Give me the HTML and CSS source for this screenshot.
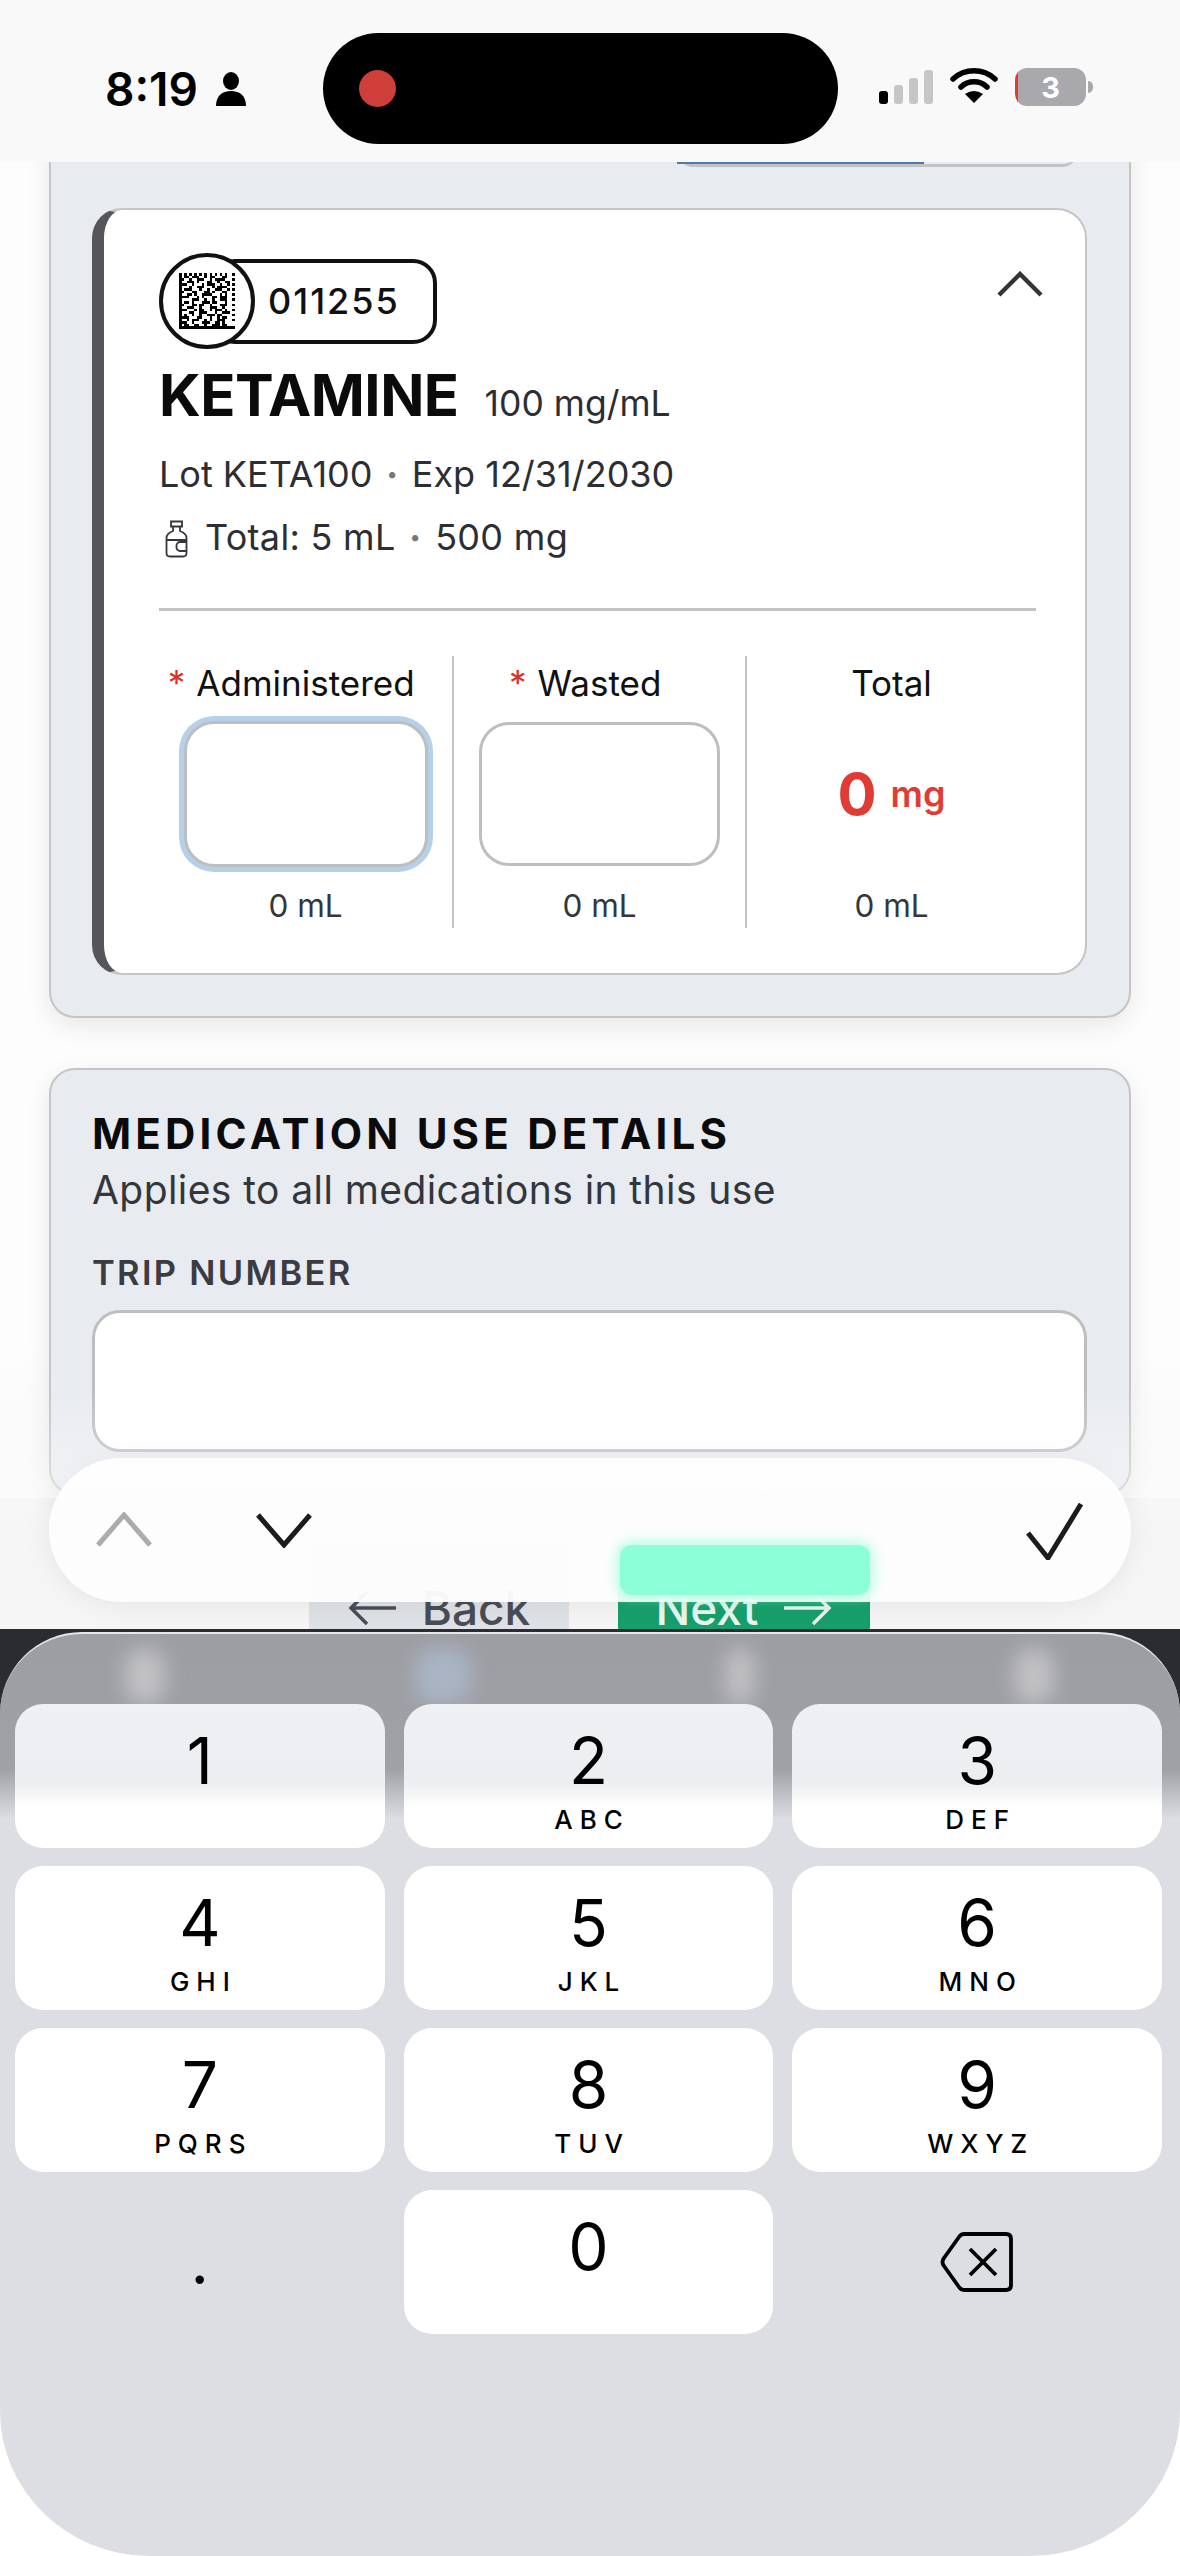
FILE: index.html
```html
<!DOCTYPE html>
<html lang="en">
<head>
  <meta charset="UTF-8">
  <meta name="viewport" content="width=device-width, initial-scale=1">
  <title>Medication use</title>
  <link rel="stylesheet" href="styles.css">
</head>
<body>

  <div class="phone">

    <header class="status-bar">
      <div class="status-left">
        <span class="status-time">8:19</span>
        <svg class="icon-person" viewBox="0 0 32 34"><ellipse cx="16" cy="9" rx="8" ry="9"/><path d="M1 34c0-10 6-15 15-15s15 5 15 15z"/></svg>
      </div>
      <div class="island"><span class="island-dot"></span></div>
      <div class="signal">
        <span class="signal-bar signal-on bar-1"></span>
        <span class="signal-bar bar-2"></span>
        <span class="signal-bar bar-3"></span>
        <span class="signal-bar bar-4"></span>
      </div>
      <svg class="icon-wifi" viewBox="0 0 48 36"><path d="M3 12a31 31 0 0 1 42 0M11 20a19 19 0 0 1 26 0" fill="none" stroke="#000" stroke-width="5.5" stroke-linecap="round"/><path d="M24 36l-9-9q9-6 18 0z"/></svg>
      <div class="battery"><span class="battery-level">3</span><span class="battery-nub"></span></div>
    </header>

    <main class="content">

      <section class="panel panel-meds">
        <div class="stock-bar"><span class="stock-fill"></span></div>

        <article class="med-card">
          <div class="med-head">
            <div class="barcode-badge">
              <span class="barcode-circle">
                <svg class="datamatrix" viewBox="0 0 22 22" shape-rendering="crispEdges"><path d="M.5 0v22M0 21.5h22M21.5 0v1m0 1v1m0 1v1m0 1v1m0 1v1m0 1v1m0 1v1m0 1v1m0 1v1m0 1v1M2 .5h1m1 0h1m1 0h1m1 0h1m1 0h1m1 0h1m1 0h1m1 0h1m1 0h1M2 1.5h2m1 0h3m2 0h1m1 0h2m3 0h2M1 2.5h1m2 0h1m2 0h3m2 0h1m1 0h4M3 3.5h3m1 0h1m3 0h2m2 0h1m2 0h2M1 4.5h2m2 0h1m3 0h1m1 0h3m2 0h1m2 0h1M4 5.5h1m2 0h3m3 0h1m1 0h4M2 6.5h3m3 0h1m2 0h1m2 0h3m2 0h1M1 7.5h1m3 0h2m3 0h2m1 0h1m3 0h2M3 8.5h2m1 0h1m2 0h4m3 0h1m1 0h1M1 9.5h3m3 0h1m1 0h1m3 0h2m1 0h3M5 10.5h3m2 0h1m2 0h1m2 0h3M2 11.5h2m1 0h1m3 0h3m1 0h2m3 0h1M1 12.5h1m3 0h2m1 0h2m2 0h1m3 0h3M3 13.5h3m2 0h1m3 0h3m2 0h1M1 14.5h2m3 0h1m1 0h2m2 0h1m1 0h3m1 0h1M4 15.5h2m2 0h3m3 0h1m2 0h3M2 16.5h1m2 0h1m2 0h1m2 0h3m1 0h2M1 17.5h3m3 0h2m3 0h1m2 0h1m1 0h2M3 18.5h1m1 0h3m2 0h1m1 0h1m2 0h3M1 19.5h2m2 0h1m3 0h3m2 0h2m1 0h1M2 20.5h2m2 0h2m2 0h1m2 0h3m1 0h2" fill="none" stroke="#000" stroke-width="1"/></svg>
              </span>
              <span class="barcode-pill">011255</span>
            </div>
            <svg class="icon-collapse" viewBox="0 0 46 26"><path d="M2 24L23 3l21 21" fill="none" stroke="#333" stroke-width="4.4"/></svg>
          </div>

          <div class="med-title">
            <h2>KETAMINE</h2>
            <span class="med-conc">100 mg/mL</span>
          </div>
          <p class="med-line med-lot">Lot KETA100<span class="dot">•</span>Exp 12/31/2030</p>
          <p class="med-line med-total">
            <svg class="icon-vial" viewBox="0 0 24 38"><path d="M6 1.5h11v5H6zM8 6.5v4.5C4 12.500 1.500 14 1.500 18v15q0 3.500 3.500 3.500h13q3.500 0 3.500-3.500V18c0-4-2.500-5.500-6.500-7V6.500M1.500 20h20M21.500 31H15a3.500 3.500 0 0 1-3.500-3.500v-2A3.500 3.500 0 0 1 15 22h6.500" fill="none" stroke="#33363b" stroke-width="1.800"/></svg>
            Total: 5 mL<span class="dot">•</span>500 mg
          </p>

          <hr class="med-divider">

          <div class="dose-grid">
            <div class="dose-col">
              <label class="dose-label"><span class="req">*</span>Administered</label>
              <div class="dose-input dose-input-focus"></div>
              <span class="dose-ml">0 mL</span>
            </div>
            <div class="dose-col">
              <label class="dose-label"><span class="req">*</span>Wasted</label>
              <div class="dose-input"></div>
              <span class="dose-ml">0 mL</span>
            </div>
            <div class="dose-col">
              <label class="dose-label">Total</label>
              <div class="dose-total"><b>0</b> <span>mg</span></div>
              <span class="dose-ml">0 mL</span>
            </div>
          </div>
        </article>
      </section>

      <section class="panel panel-details">
        <h3>MEDICATION USE DETAILS</h3>
        <p class="panel-sub">Applies to all medications in this use</p>
        <label class="field-label">TRIP NUMBER</label>
        <div class="field-input"></div>
      </section>

      <div class="nav-row">
        <button class="nav-btn nav-back">
          <svg class="icon-arrow" viewBox="0 0 50 36"><path d="M48 18H3M19 2L3 18l16 16" fill="none" stroke="currentColor" stroke-width="3.500"/></svg>
          Back
        </button>
        <button class="nav-btn nav-next">
          Next
          <svg class="icon-arrow" viewBox="0 0 50 36"><path d="M2 18h45M31 2l16 16-16 16" fill="none" stroke="currentColor" stroke-width="3.500"/></svg>
        </button>
      </div>
    </main>

    <div class="input-bar">
      <span class="next-glow"></span>
      <div class="input-bar-arrows">
        <svg class="icon-chev" viewBox="0 0 58 36"><path d="M3 33L29 3l26 30" fill="none" stroke="#acacac" stroke-width="5"/></svg>
        <svg class="icon-chev" viewBox="0 0 58 36"><path d="M3 3l26 30L55 3" fill="none" stroke="#1c1c1e" stroke-width="5"/></svg>
      </div>
      <svg class="icon-check" viewBox="0 0 60 60"><path d="M4 33l20 25L57 4" fill="none" stroke="#1c1c1e" stroke-width="5"/></svg>
    </div>

    <div class="keyboard-wrap">
      <div class="keyboard">
        <span class="blob blob-1"></span>
        <span class="blob blob-2"></span>
        <span class="blob blob-3"></span>
        <span class="blob blob-4"></span>

        <div class="key key-top"><span class="key-num">1</span></div>
        <div class="key key-top"><span class="key-num">2</span><span class="key-abc">ABC</span></div>
        <div class="key key-top"><span class="key-num">3</span><span class="key-abc">DEF</span></div>
        <div class="key"><span class="key-num">4</span><span class="key-abc">GHI</span></div>
        <div class="key"><span class="key-num">5</span><span class="key-abc">JKL</span></div>
        <div class="key"><span class="key-num">6</span><span class="key-abc">MNO</span></div>
        <div class="key"><span class="key-num">7</span><span class="key-abc">PQRS</span></div>
        <div class="key"><span class="key-num">8</span><span class="key-abc">TUV</span></div>
        <div class="key"><span class="key-num">9</span><span class="key-abc">WXYZ</span></div>
        <div class="key key-plain"><span class="key-num key-period">.</span></div>
        <div class="key"><span class="key-num">0</span></div>
        <div class="key key-plain">
          <svg class="icon-backspace" viewBox="0 0 74 62"><path d="M24 3h42q5 0 5 5v46q0 5-5 5H24q-3 0-5-3L4 35q-3-4 0-8L19 6q2-3 5-3zM30 18l26 26M56 18L30 44" fill="none" stroke="#000" stroke-width="3.800" stroke-linejoin="round"/></svg>
        </div>
      </div>
    </div>

  </div>

</body>
</html>
```

FILE: styles.css
```css
* {
  box-sizing: border-box;
}

body {
  margin: 0;
  background-color: #fdfdfd;
  font-family: Inter, "Liberation Sans", sans-serif;
  color: #111;
}

.phone {
  position: relative;
  width: 1180px;
  height: 2556px;
  display: flex;
  flex-direction: column;
  overflow: hidden;
}

/* status bar */

.status-bar {
  position: relative;
  z-index: 2;
  flex: none;
  height: 162px;
  padding-top: 33px;
  display: flex;
  align-items: flex-start;
  background-color: #f9f9f9;
}

.status-left {
  width: 323px;
  height: 111px;
  padding-left: 105px;
  display: flex;
  align-items: center;
  gap: 17px;
}

.status-time {
  font-size: 46px;
  font-weight: 600;
  color: #000;
}

.icon-person {
  width: 32px;
  height: 34px;
}

.island {
  width: 515px;
  height: 111px;
  padding-left: 36px;
  display: flex;
  align-items: center;
  border-radius: 56px;
  background-color: #000;
}

.island-dot {
  width: 37px;
  height: 37px;
  border-radius: 50%;
  background-color: #cd3f38;
}

.signal {
  height: 71px;
  margin-left: 41px;
  display: flex;
  align-items: flex-end;
  gap: 6px;
}

.signal-bar {
  width: 9px;
  border-radius: 3px;
  background-color: #c6c6c6;
}

.signal-on {
  background-color: #000;
}

.bar-1 { height: 13px; }
.bar-2 { height: 19px; }
.bar-3 { height: 26px; }
.bar-4 { height: 34px; }

.icon-wifi {
  width: 48px;
  height: 36px;
  margin: 34px 0 0 17px;
}

.battery {
  position: relative;
  width: 71px;
  height: 38px;
  margin: 35px 0 0 17px;
  border-radius: 12px;
  background: linear-gradient(90deg, #e2392f 3px, #a9a9ad 3px);
  display: flex;
  align-items: center;
  justify-content: center;
}

.battery-level {
  font-size: 29px;
  font-weight: 700;
  color: #fff;
}

.battery-nub {
  position: absolute;
  right: -7px;
  top: 13px;
  width: 5px;
  height: 12px;
  border-radius: 0 6px 6px 0;
  background-color: #a9a9ad;
}

/* page content */

.content {
  flex: 1;
  min-height: 0;
  margin-top: -40px;
  overflow: hidden;
  background: linear-gradient(#fdfdfd 1228px, #f6f6f7 1400px);
}

.panel {
  margin: 0 49px;
  border: 2px solid #c4c5c8;
  border-radius: 26px;
  background-color: #e8ebf0;
  box-shadow: 0 8px 26px rgba(0,0,0,0.09);
}

.panel-meds {
  height: 896px;
  padding: 0 42px 0 41px;
}

.stock-bar {
  width: 401px;
  height: 43px;
  margin: 0 9px 41px auto;
  border-bottom: 3px solid #c2c3c7;
  border-radius: 0 0 16px 16px;
}

.stock-fill {
  display: block;
  width: 247px;
  height: 40px;
  margin-left: 0;
  border-bottom: 3px solid #4f7bab;
}

.med-card {
  height: 767px;
  padding: 43px 49px 0 55px;
  border: 2px solid #c4c5c8;
  border-left: 12px solid #55565a;
  border-radius: 30px;
  background-color: #fff;
}

.med-head {
  display: flex;
  justify-content: space-between;
  align-items: flex-start;
}

.barcode-badge {
  display: flex;
  align-items: center;
}

.barcode-circle {
  position: relative;
  width: 96px;
  height: 96px;
  display: flex;
  align-items: center;
  justify-content: center;
  border: 4px solid #111;
  border-radius: 50%;
  background-color: #fff;
}

.datamatrix {
  width: 56px;
  height: 56px;
}

.barcode-pill {
  width: 226px;
  height: 85px;
  margin-left: -44px;
  padding-left: 53px;
  display: flex;
  align-items: center;
  border: 4px solid #111;
  border-radius: 24px;
  font-size: 36px;
  font-weight: 500;
  letter-spacing: 2px;
}

.icon-collapse {
  width: 46px;
  height: 26px;
  margin: 18px -7px 0 0;
}

.med-title {
  margin-top: 11px;
  display: flex;
  align-items: baseline;
  gap: 26px;
}

.med-title h2 {
  margin: 0;
  font-size: 58px;
  line-height: 70px;
  font-weight: 700;
  letter-spacing: -0.5px;
  color: #0b0b0b;
}

.med-conc {
  font-size: 35.500px;
  color: #2c2e33;
}

.med-line {
  margin: 0;
  display: flex;
  align-items: center;
  font-size: 36px;
  line-height: 44px;
  color: #2c2e33;
}

.med-lot {
  margin-top: 22px;
}

.med-total {
  margin-top: 19px;
  letter-spacing: 0.300px;
}

.dot {
  margin: 0 14px;
  font-size: 20px;
  color: #777;
}

.icon-vial {
  width: 24px;
  height: 38px;
  margin: 3px 16px 0 6px;
}

.med-divider {
  height: 3px;
  margin: 49px 0 0;
  border: 0;
  background-color: #c2c3c5;
}

.dose-grid {
  margin-top: 45px;
  display: grid;
  grid-template-columns: 295px 293px 1fr;
}

.dose-col {
  height: 272px;
  display: flex;
  flex-direction: column;
  align-items: center;
  border-right: 2px solid #c2c3c5;
}

.dose-col:last-child {
  border-right: 0;
}

.dose-label {
  position: relative;
  height: 54px;
  font-size: 35px;
  line-height: 54px;
  color: #111;
}

.req {
  position: absolute;
  right: 100%;
  margin-right: 11px;
  color: #d8322b;
}

.dose-input {
  width: 241px;
  height: 144px;
  margin-top: 12px;
  border: 3px solid #bdbec0;
  border-radius: 30px;
  background-color: #fff;
}

.dose-input-focus {
  width: 244px;
  height: 146px;
  margin: 11px 0 -1px;
  box-shadow: 0 0 0 5px #b7d0ea;
}

.dose-total {
  height: 144px;
  margin-top: 12px;
  display: flex;
  align-items: center;
  gap: 14px;
  color: #e03c36;
}

.dose-total b {
  font-size: 58px;
  font-weight: 700;
}

.dose-total span {
  font-size: 36px;
  font-weight: 600;
}

.dose-ml {
  margin-top: 20px;
  font-size: 31.500px;
  line-height: 40px;
  color: #33363b;
}

.panel-details {
  height: 427px;
  margin-top: 50px;
  padding: 40px 42px 0 41px;
}

.panel-details h3 {
  margin: 0;
  font-size: 42px;
  line-height: 48px;
  font-weight: 700;
  letter-spacing: 4.200px;
  color: #0b0b0b;
}

.panel-sub {
  margin: 9px 0 0;
  font-size: 39px;
  line-height: 46px;
  letter-spacing: 0.420px;
  color: #33363b;
}

.field-label {
  display: block;
  margin-top: 40px;
  font-size: 34.500px;
  line-height: 40px;
  font-weight: 600;
  letter-spacing: 2.300px;
  color: #3a3c42;
}

.field-input {
  height: 142px;
  margin-top: 17px;
  border: 3px solid #bdbec0;
  border-radius: 28px;
  background-color: #fff;
}

.nav-row {
  margin-top: 50px;
  display: flex;
  justify-content: center;
  gap: 49px;
  padding-right: 1px;
}

.nav-btn {
  height: 126px;
  display: flex;
  align-items: center;
  justify-content: center;
  gap: 24px;
  border: 0;
  font-family: inherit;
  font-size: 46px;
  font-weight: 500;
}

.nav-back {
  width: 260px;
  background-color: #dfe2e7;
  color: #4a4d55;
}

.nav-next {
  width: 252px;
  background-color: #16a06c;
  color: #e9f7f1;
}

.icon-arrow {
  width: 50px;
  height: 36px;
}

/* input accessory bar over the page */

.input-bar {
  position: absolute;
  z-index: 1;
  left: 49px;
  top: 1458px;
  width: 1082px;
  height: 144px;
  padding: 0 47px 0 46px;
  display: flex;
  align-items: center;
  justify-content: space-between;
  border-radius: 72px;
  background-color: rgba(253,253,253,0.96);
  box-shadow: 0 4px 30px rgba(0,0,0,0.07);
}

/* content fades as it goes under the bar */
.input-bar::before {
  content: "";
  position: absolute;
  left: -49px;
  right: -49px;
  top: -70px;
  height: 110px;
  background: linear-gradient(rgba(255,255,255,0), rgba(255,255,255,0.45));
}

.input-bar-arrows {
  display: flex;
  gap: 102px;
}

.icon-chev {
  width: 58px;
  height: 36px;
}

.icon-check {
  width: 60px;
  height: 60px;
}

.next-glow {
  position: absolute;
  left: 571px;
  top: 87px;
  width: 250px;
  height: 50px;
  border-radius: 12px;
  background-color: #8dffd8;
  box-shadow: 0 0 12px 4px rgba(141,255,216,0.6);
}

/* keypad */

.keyboard-wrap {
  flex: none;
  height: 927px;
  padding-top: 3px;
  background: linear-gradient(#2a2c30 0, #2a2c30 100px, #fff 100px);
}

.keyboard {
  position: relative;
  height: 924px;
  padding: 70px 18px 0 15px;
  display: grid;
  grid-template-columns: repeat(3, 1fr);
  grid-auto-rows: 144px;
  gap: 18px 19px;
  align-content: start;
  border-top: 2px solid #e6e7e9;
  border-radius: 82px 82px 150px 150px / 82px 82px 145px 145px;
  background: linear-gradient(#9d9ea3 0, #a0a1a6 135px, #dcdee3 185px);
  overflow: hidden;
}

.blob {
  position: absolute;
  top: 14px;
  width: 40px;
  height: 56px;
  border-radius: 20px;
  background-color: rgba(205,205,208,0.75);
  filter: blur(10px);
}

.blob-1 { left: 125px; }
.blob-2 { left: 415px; width: 56px; background-color: rgba(172,186,205,0.8); }
.blob-3 { left: 726px; width: 28px; }
.blob-4 { left: 1014px; }

.key {
  position: relative;
  padding-top: 22px;
  display: flex;
  flex-direction: column;
  align-items: center;
  border-radius: 28px;
  background-color: #fff;
}

.key-top {
  background: linear-gradient(#eff0f3 0, #eceef1 55%, #fff 72%);
}

.key-plain {
  background: none;
}

.key-num {
  font-size: 64px;
  line-height: 70px;
  color: #000;
}

.key-period {
  margin-top: 14px;
}

.key-abc {
  margin-top: 8px;
  font-size: 26px;
  line-height: 32px;
  font-weight: 500;
  letter-spacing: 7px;
  padding-left: 7px;
  color: #000;
}

.icon-backspace {
  width: 74px;
  height: 62px;
  margin-top: 19px;
}
```
